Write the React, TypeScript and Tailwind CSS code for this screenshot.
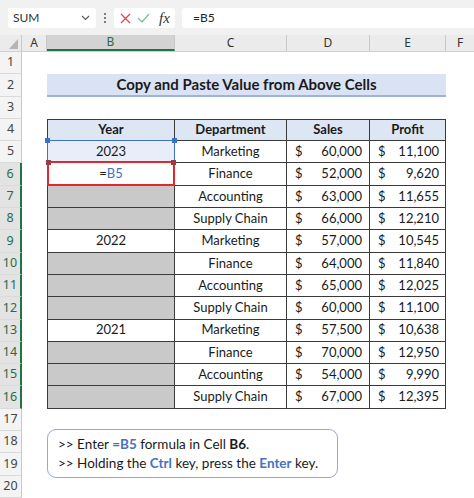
import React from "react";

const COLS = [25, 128, 112, 83, 76, 28]; // A..F
const ROW_H = 22.3;

type DataRow = { year?: string; dept: string; sales: string; profit: string; gray?: boolean };

const data: DataRow[] = [
  { year: "2023", dept: "Marketing", sales: "60,000", profit: "11,100" },
  { year: "=B5", dept: "Finance", sales: "52,000", profit: "9,620" },
  { gray: true, dept: "Accounting", sales: "63,000", profit: "11,655" },
  { gray: true, dept: "Supply Chain", sales: "66,000", profit: "12,210" },
  { year: "2022", dept: "Marketing", sales: "57,000", profit: "10,545" },
  { gray: true, dept: "Finance", sales: "64,000", profit: "11,840" },
  { gray: true, dept: "Accounting", sales: "65,000", profit: "12,025" },
  { gray: true, dept: "Supply Chain", sales: "60,000", profit: "11,100" },
  { year: "2021", dept: "Marketing", sales: "57,500", profit: "10,638" },
  { gray: true, dept: "Finance", sales: "70,000", profit: "12,950" },
  { gray: true, dept: "Accounting", sales: "54,000", profit: "9,990" },
  { gray: true, dept: "Supply Chain", sales: "67,000", profit: "12,395" },
];

function RowHeader({ n }: { n: number }) {
  const sel = n >= 6 && n <= 16;
  return (
    <div
      className={
        "w-[22px] shrink-0 flex items-center justify-center text-[12.5px] border-b border-b-[#dadada] " +
        (sel
          ? "bg-[#e3e3e3] text-[#2c6a46] border-r-2 border-r-[#217346]"
          : "bg-[#f4f4f4] text-[#444] border-r border-r-[#c8c8c8]")
      }
      style={{ height: ROW_H, fontFamily: "'Noto Sans', sans-serif" }}
    >
      {n}
    </div>
  );
}

function Row({ n, children }: { n: number; children?: React.ReactNode }) {
  return (
    <div className="flex" style={{ height: ROW_H }}>
      <RowHeader n={n} />
      {children}
    </div>
  );
}

function Blank({ w }: { w: number }) {
  return <div className="shrink-0 h-full" style={{ width: w }} />;
}

function TableRow({ n, r }: { n: number; r: DataRow }) {
  const first = n === 5;
  const isB6 = n === 6;
  return (
    <Row n={n}>
      <Blank w={COLS[0]} />
      <div
        className={
          "relative shrink-0 h-full flex items-center justify-center border-l border-b border-r border-[#3a3a3a] " +
          (r.gray ? "bg-[#c9c9c9] " : first ? "bg-[#e8eef9] " : "bg-white ")
        }
        style={{ width: COLS[1] }}
      >
        {isB6 ? (
          <span>
            =<span className="text-[#3f6fc6]">B5</span>
          </span>
        ) : (
          r.year
        )}
        {first && (
          <div className="absolute -inset-px border-[1.5px] border-[#3f6fc6] pointer-events-none">
            <div className="absolute -left-[3px] -top-[3px] w-[5px] h-[5px] bg-[#3f6fc6]" />
            <div className="absolute -right-[3px] -top-[3px] w-[5px] h-[5px] bg-[#3f6fc6]" />
          </div>
        )}
        {isB6 && (
          <div className="absolute -left-[1px] -top-[2px] -right-[1px] -bottom-[1px] border-2 border-[#e2282d] pointer-events-none">
            <div className="absolute -left-[3px] -top-[3px] w-[5px] h-[5px] bg-[#9b3a48]" />
            <div className="absolute -right-[3px] -top-[3px] w-[5px] h-[5px] bg-[#9b3a48]" />
          </div>
        )}
      </div>
      <div
        className="shrink-0 h-full flex items-center justify-center border-b border-r border-[#3a3a3a]"
        style={{ width: COLS[2] }}
      >
        {r.dept}
      </div>
      <div
        className="shrink-0 h-full flex items-center justify-between pl-[8px] pr-[7px] border-b border-r border-[#3a3a3a]"
        style={{ width: COLS[3] }}
      >
        <span>$</span>
        <span>{r.sales}</span>
      </div>
      <div
        className="shrink-0 h-full flex items-center justify-between pl-[8px] pr-[6px] border-b border-r border-[#3a3a3a]"
        style={{ width: COLS[4] }}
      >
        <span>$</span>
        <span>{r.profit}</span>
      </div>
      <Blank w={COLS[5]} />
    </Row>
  );
}

export default function App() {
  return (
    <div
      className="relative w-[474px] h-[498px] overflow-hidden bg-white text-[#1a1a1a] text-[13px]"
      style={{ fontFamily: "Lato, 'Noto Sans', sans-serif" }}
    >
      {/* Formula bar */}
      <div className="h-[35px] bg-[#f1f1f1] flex items-start pt-[8px] pl-[8px] gap-[7px]">
        <div className="w-[88px] h-[20px] bg-white rounded-[3px] flex items-center justify-between pl-[5px] pr-[6px] text-[12px] text-[#333]">
          <span>SUM</span>
          <svg width="9" height="6" viewBox="0 0 9 6" fill="none">
            <path d="M1 1l3.5 3.5L8 1" stroke="#555" strokeWidth="1.1" />
          </svg>
        </div>
        <div className="w-[4px] h-[20px] flex flex-col items-center justify-center gap-[2px]">
          <div className="w-[2px] h-[2px] bg-[#555] rounded-full" />
          <div className="w-[2px] h-[2px] bg-[#555] rounded-full" />
          <div className="w-[2px] h-[2px] bg-[#555] rounded-full" />
        </div>
        <div className="w-[61px] h-[20px] bg-white rounded-[3px] flex items-center pl-[6px] gap-[6px]">
          <svg width="11" height="11" viewBox="0 0 11 11">
            <path d="M1 1L10 10M10 1L1 10" stroke="#e04848" strokeWidth="1.3" />
          </svg>
          <svg width="13" height="10" viewBox="0 0 13 10">
            <path d="M1 5l4 4L12 1" stroke="#7dbf97" strokeWidth="1.2" fill="none" />
          </svg>
          <span
            className="ml-[3px] text-[15px] italic text-[#333] leading-none"
            style={{ fontFamily: "'Liberation Serif', serif" }}
          >
            fx
          </span>
        </div>
        <div className="flex-1 h-[20px] bg-white rounded-l-[3px] flex items-center pl-[11px] text-[12px] text-[#222]">
          =B5
        </div>
      </div>

      {/* Column headers */}
      <div className="flex h-[17px] bg-[#ebebeb] text-[12px] text-[#333] border-b border-[#d0d0d0]" style={{ fontFamily: "'Noto Sans', sans-serif" }}>
        <div className="w-[22px] shrink-0 h-full relative border-r border-[#c8c8c8]">
          <svg className="absolute right-[3px] bottom-[2px]" width="9" height="10" viewBox="0 0 9 10">
            <path d="M9 0V10H0Z" fill="#b5b5b5" />
          </svg>
        </div>
        <div className="shrink-0 h-full flex items-center justify-center border-r border-[#c8c8c8]" style={{ width: COLS[0] }}>
          A
        </div>
        <div
          className="shrink-0 h-full flex items-center justify-center bg-[#d3d3d3] text-[#2c6a46] border-b-2 border-[#217346] border-r border-r-[#c8c8c8]"
          style={{ width: COLS[1] }}
        >
          B
        </div>
        <div className="shrink-0 h-full flex items-center justify-center border-r border-[#c8c8c8]" style={{ width: COLS[2] }}>
          C
        </div>
        <div className="shrink-0 h-full flex items-center justify-center border-r border-[#c8c8c8]" style={{ width: COLS[3] }}>
          D
        </div>
        <div className="shrink-0 h-full flex items-center justify-center border-r border-[#c8c8c8]" style={{ width: COLS[4] }}>
          E
        </div>
        <div className="shrink-0 h-full flex items-center justify-center" style={{ width: COLS[5] }}>
          F
        </div>
      </div>

      {/* Rows */}
      <Row n={1} />
      <Row n={2}>
        <Blank w={COLS[0]} />
        <div
          className="shrink-0 h-full bg-[#dae3f3] border-b-2 border-[#9db3de] flex items-center justify-center font-bold text-[15px]"
          style={{ width: COLS[1] + COLS[2] + COLS[3] + COLS[4] }}
        >
          Copy and Paste Value from Above Cells
        </div>
      </Row>
      <Row n={3} />
      <Row n={4}>
        <Blank w={COLS[0]} />
        {["Year", "Department", "Sales", "Profit"].map((h, i) => (
          <div
            key={h}
            className={
              "shrink-0 h-full flex items-center justify-center font-bold bg-[#dde7f4] border-t border-b border-r border-[#3a3a3a] " +
              (i === 0 ? "border-l" : "")
            }
            style={{ width: COLS[i + 1] }}
          >
            {h}
          </div>
        ))}
      </Row>
      {data.map((r, i) => (
        <TableRow key={i} n={i + 5} r={r} />
      ))}
      <Row n={17} />
      <Row n={18} />
      <Row n={19} />
      <Row n={20} />

      {/* Note box */}
      <div className="absolute left-[47px] top-[429px] w-[291px] h-[49px] rounded-[9px] border-[1.5px] border-[#8faadc] bg-white pl-[10px] pt-[5px] text-[13.5px] leading-[19px] text-[#1a1a1a]">
        <div>
          &gt;&gt; Enter <span className="text-[#4472c4] font-bold">=B5</span> formula in Cell{" "}
          <span className="font-bold">B6</span>.
        </div>
        <div>
          &gt;&gt; Holding the <span className="text-[#4472c4] font-bold">Ctrl</span> key, press the{" "}
          <span className="text-[#4472c4] font-bold">Enter</span> key.
        </div>
      </div>
    </div>
  );
}
